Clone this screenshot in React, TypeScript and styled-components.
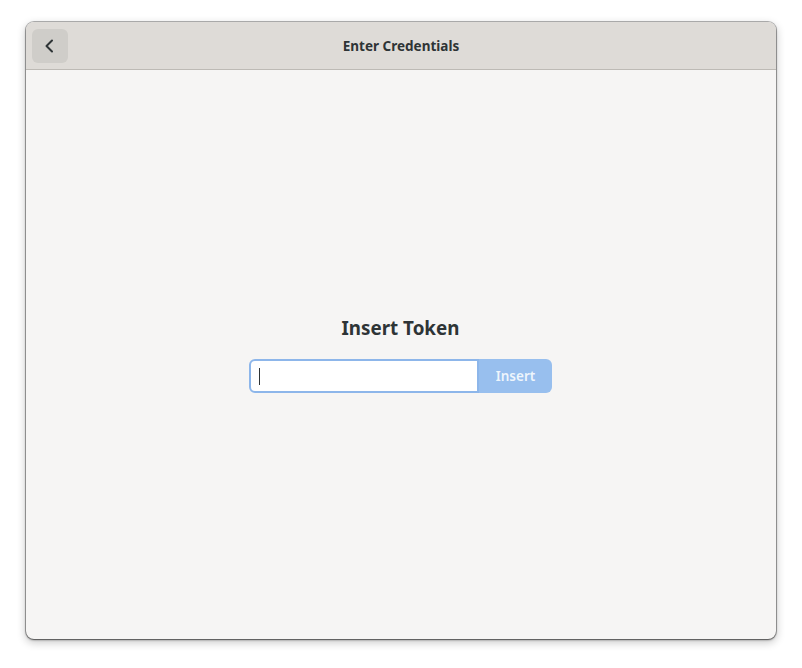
import styled, { createGlobalStyle } from "styled-components";

const Global = createGlobalStyle`
  html, body {
    margin: 0;
    padding: 0;
    background: #ffffff;
  }
  body {
    font-family: "Noto Sans", "Open Sans", sans-serif;
  }
`;

const Page = styled.div`
  width: 802px;
  height: 668px;
  padding: 22px 26px 0 26px;
  box-sizing: border-box;
`;

const Window = styled.div`
  width: 750px;
  height: 617px;
  box-sizing: border-box;
  display: flex;
  flex-direction: column;
  border-radius: 8px;
  overflow: hidden;
  background: #f6f5f4;
  box-shadow: 0 0 0 1px rgba(0, 0, 0, 0.28), 0 1px 2px 0 rgba(0, 0, 0, 0.5),
    0 3px 8px 1px rgba(0, 0, 0, 0.2);
`;

const HeaderBar = styled.div`
  height: 47px;
  flex-shrink: 0;
  display: grid;
  grid-template-columns: 60px 1fr 60px;
  align-items: center;
  padding: 0 6px;
  background: #dedbd7;
  border-bottom: 1px solid #bdbab5;
`;

const BackButton = styled.button`
  width: 36px;
  height: 34px;
  border: none;
  border-radius: 6px;
  background: #cfcdc9;
  color: #2e3436;
  display: flex;
  align-items: center;
  justify-content: center;
  padding: 0;
`;

const Title = styled.div`
  text-align: center;
  font-size: 13.5px;
  font-weight: 700;
  color: #2e3436;
  padding-top: 1px;
`;

const Content = styled.div`
  flex: 1;
  display: flex;
  flex-direction: column;
  align-items: center;
  justify-content: center;
  gap: 18px;
  padding-bottom: 1px;
  padding-right: 1px;
`;

const Heading = styled.h2`
  margin: 0;
  font-size: 18.8px;
  font-weight: 700;
  color: #2e3436;
`;

const EntryRow = styled.div`
  display: flex;
`;

const Entry = styled.div`
  width: 230px;
  height: 34px;
  box-sizing: border-box;
  border: 2px solid #8db6ea;
  border-radius: 6px 0 0 6px;
  background: #ffffff;
  display: flex;
  align-items: center;
  padding-left: 8px;
`;

const Caret = styled.span`
  width: 1px;
  height: 17px;
  background: #2e3436;
`;

const InsertButton = styled.button`
  width: 73px;
  height: 34px;
  border: none;
  border-radius: 0 6px 6px 0;
  background: #98bfee;
  color: rgba(255, 255, 255, 0.85);
  font-family: "Noto Sans", "Open Sans", sans-serif;
  font-size: 13.5px;
  font-weight: 600;
  padding: 0;
`;

export default function App() {
  return (
    <>
      <Global />
      <Page>
        <Window>
          <HeaderBar>
            <BackButton>
              <svg width="16" height="16" viewBox="0 0 16 16">
                <path
                  d="M10 2.5 L4.5 8 L10 13.5"
                  fill="none"
                  stroke="#2e3436"
                  strokeWidth="2"
                  strokeLinecap="round"
                  strokeLinejoin="round"
                />
              </svg>
            </BackButton>
            <Title>Enter Credentials</Title>
            <div />
          </HeaderBar>
          <Content>
            <Heading>Insert Token</Heading>
            <EntryRow>
              <Entry>
                <Caret />
              </Entry>
              <InsertButton>Insert</InsertButton>
            </EntryRow>
          </Content>
        </Window>
      </Page>
    </>
  );
}
